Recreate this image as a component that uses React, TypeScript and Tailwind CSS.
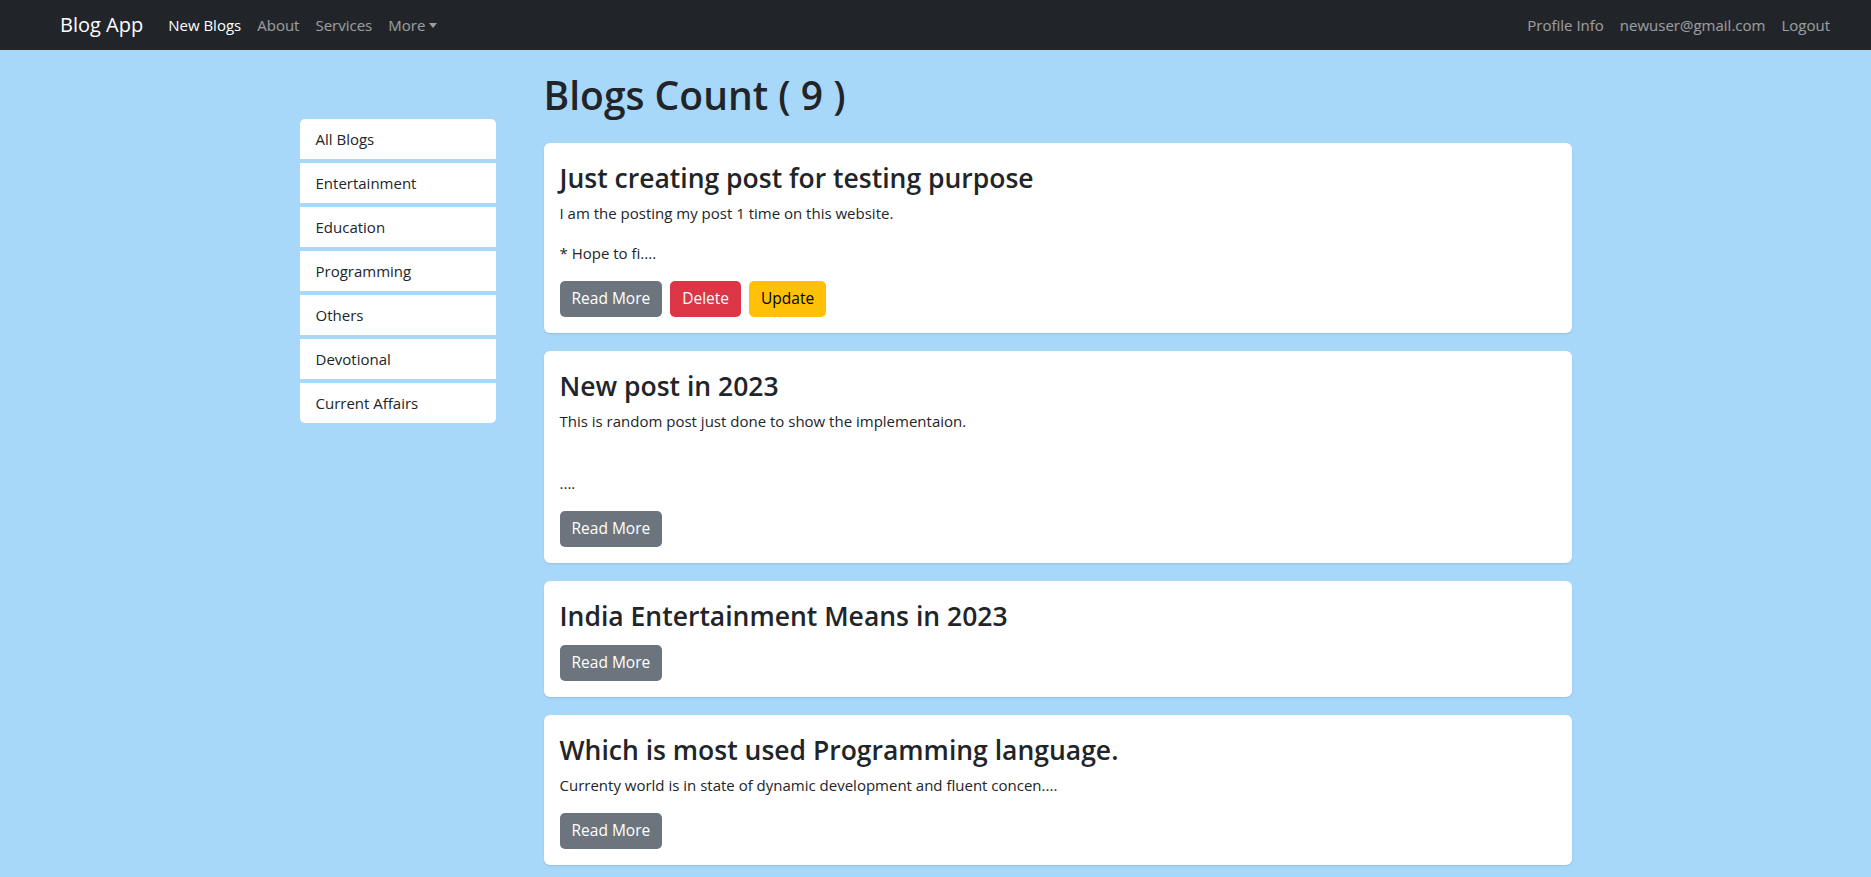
import React from 'react';

type Blog = {
  title: string;
  body: string[];
  owner?: boolean;
};

const categories = ['All Blogs', 'Entertainment', 'Education', 'Programming', 'Others', 'Devotional', 'Current Affairs'];

const blogs: Blog[] = [
  {
    title: 'Just creating post for testing purpose',
    body: ['I am the posting my post 1 time on this website.', '* Hope to fi....'],
    owner: true,
  },
  {
    title: 'New post in 2023',
    body: ['This is random post just done to show the implementaion.', '', '....'],
  },
  {
    title: 'India Entertainment Means in 2023',
    body: [],
  },
  {
    title: 'Which is most used Programming language.',
    body: ['Currenty world is in state of dynamic development and fluent concen....'],
  },
];

function Navbar() {
  return (
    <nav className="flex h-[50px] items-center justify-between bg-[#212529] pl-[60px] pr-[33px] text-[15px]">
      <div className="flex items-center">
        <a className="mr-[17px] text-[20px] text-white">Blog App</a>
        <a className="px-[8px] text-white">New Blogs</a>
        <a className="px-[8px] text-white/55">About</a>
        <a className="px-[8px] text-white/55">Services</a>
        <a className="flex items-center px-[8px] text-white/55">
          More
          <span className="ml-[4px] inline-block h-0 w-0 border-x-[4.5px] border-t-[5px] border-x-transparent border-t-current" />
        </a>
      </div>
      <div className="flex items-center">
        <a className="px-[8px] text-white/55">Profile Info</a>
        <a className="px-[8px] text-white/55">newuser@gmail.com</a>
        <a className="px-[8px] text-white/55">Logout</a>
      </div>
    </nav>
  );
}

function Sidebar() {
  return (
    <div className="mt-[48px] flex w-[196px] shrink-0 flex-col gap-[4px]">
      {categories.map((c, i) => (
        <div
          key={c}
          className={`flex h-[40px] items-center bg-white px-[16px] text-[15px] text-[#212529] ${
            i === 0 ? 'rounded-t-[5px]' : ''
          } ${i === categories.length - 1 ? 'rounded-b-[5px]' : ''}`}
        >
          {c}
        </div>
      ))}
    </div>
  );
}

function BlogCard({ blog }: { blog: Blog }) {
  return (
    <div className="rounded-[6px] bg-white px-[16px] pt-[18px] pb-[16px] shadow-[0_1px_2px_rgba(0,0,0,0.12)]">
      <h3 className="text-[26.5px] leading-[34px] font-semibold text-[#212529]">{blog.title}</h3>
      {blog.body.length > 0 && (
        <div className="mt-[6px] flex flex-col gap-[16px] text-[15px] leading-[24px] text-[#212529]">
          {blog.body.map((p, i) => (p === '' ? <div key={i} className="h-[6px]" /> : <p key={i}>{p}</p>))}
        </div>
      )}
      <div className={`flex gap-[8px] ${blog.body.length > 0 ? 'mt-[16px]' : 'mt-[12px]'}`}>
        <button className="h-[36px] rounded-[5px] bg-[#6c757d] px-[12px] text-[15.5px] text-white">Read More</button>
        {blog.owner && (
          <>
            <button className="h-[36px] rounded-[5px] bg-[#dc3545] px-[12px] text-[15.5px] text-white">Delete</button>
            <button className="h-[36px] rounded-[5px] bg-[#ffc107] px-[12px] text-[15.5px] text-black">Update</button>
          </>
        )}
      </div>
    </div>
  );
}

export default function App() {
  return (
    <div className="min-h-screen bg-[#a8d8f9] font-['Open_Sans',sans-serif]">
      <Navbar />
      <div className="mx-auto flex w-[1272px] gap-[48px] pt-[21px] pb-[16px]">
        <Sidebar />
        <div className="flex-1">
          <h1 className="mb-[24px] text-[39px] leading-[48px] font-semibold text-[#212529]">Blogs Count ( 9 )</h1>
          <div className="flex flex-col gap-[18px]">
            {blogs.map((b) => (
              <BlogCard key={b.title} blog={b} />
            ))}
          </div>
        </div>
      </div>
    </div>
  );
}
